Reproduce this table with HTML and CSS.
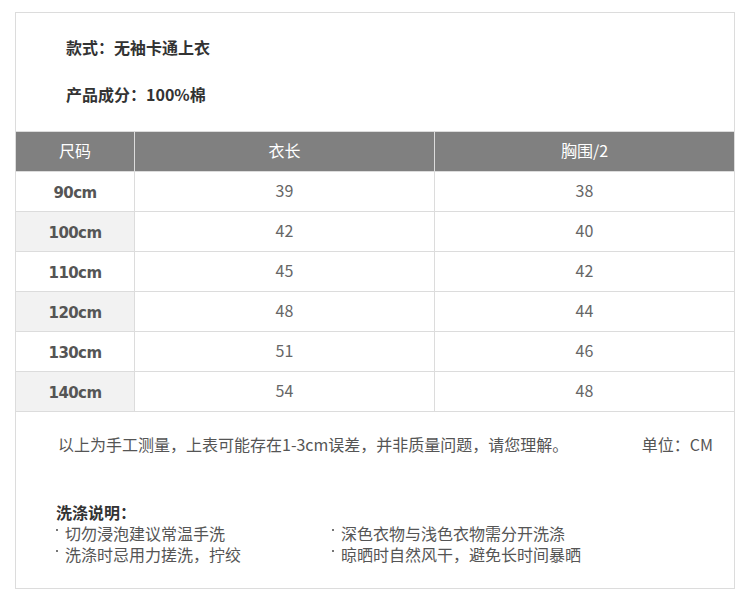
FILE: index.html
```html
<!DOCTYPE html>
<html lang="zh-CN">
<head>
<meta charset="utf-8">
<title>尺码表</title>
<link rel="stylesheet" href="styles.css">
</head>
<body>
<div class="sheet">
  <div class="info">
    <p class="info-line">款式：无袖卡通上衣</p>
    <p class="info-line">产品成分：100%棉</p>
  </div>
  <table class="size-table">
    <colgroup>
      <col class="c1"><col class="c2"><col class="c3">
    </colgroup>
    <thead>
      <tr><th>尺码</th><th>衣长</th><th>胸围/2</th></tr>
    </thead>
    <tbody>
      <tr><td class="size">90cm</td><td>39</td><td>38</td></tr>
      <tr><td class="size alt">100cm</td><td>42</td><td>40</td></tr>
      <tr><td class="size">110cm</td><td>45</td><td>42</td></tr>
      <tr><td class="size alt">120cm</td><td>48</td><td>44</td></tr>
      <tr><td class="size">130cm</td><td>51</td><td>46</td></tr>
      <tr><td class="size alt">140cm</td><td>54</td><td>48</td></tr>
    </tbody>
  </table>
  <div class="note">
    <span>以上为手工测量，上表可能存在1-3cm误差，并非质量问题，请您理解。</span>
    <span>单位：CM</span>
  </div>
  <div class="wash">
    <h3 class="wash-title">洗涤说明：</h3>
    <ul class="wash-list">
      <li>切勿浸泡建议常温手洗</li>
      <li>深色衣物与浅色衣物需分开洗涤</li>
      <li>洗涤时忌用力搓洗，拧绞</li>
      <li>晾晒时自然风干，避免长时间暴晒</li>
    </ul>
  </div>
</div>
</body>
</html>
```

FILE: styles.css
```css
html, body {
  margin: 0;
  padding: 0;
  background: #fff;
}
body {
  font-family: "Noto Sans CJK SC", "Noto Sans", sans-serif;
  font-size: 16px;
  color: #333;
}
.sheet {
  margin: 12px 0 0 15px;
  width: 718px;
  height: 575px;
  border: 1px solid #dcdcdc;
}
.info {
  padding: 11px 0 13px 50px;
}
.info-line {
  margin: 0;
  line-height: 47px;
  font-weight: 700;
  color: #333;
}
.size-table {
  margin-left: -1px;
  width: 719px;
  border-collapse: collapse;
  table-layout: fixed;
}
.size-table col.c1 { width: 119px; }
.size-table col.c2 { width: 300px; }
.size-table col.c3 { width: 300px; }
.size-table th,
.size-table td {
  border: 1px solid #dcdcdc;
  height: 36px;
  padding: 0 0 3px;
  text-align: center;
  vertical-align: middle;
}
.size-table th {
  background: #808080;
  color: #fff;
  font-weight: 400;
  font-size: 16px;
}
.size-table td {
  color: #666;
  font-size: 16px;
}
.size-table td.size {
  font-family: "DejaVu Sans", sans-serif;
  font-weight: 700;
  font-size: 15px;
  letter-spacing: -0.6px;
  color: #555;
  height: 37px;
  padding: 2px 0 0;
}
.size-table td.alt {
  background: #f2f2f2;
}
.note {
  display: flex;
  justify-content: space-between;
  padding: 21px 21px 0 42px;
  line-height: 22px;
  color: #555;
}
.wash {
  padding: 46px 0 0 40px;
}
.wash-title {
  margin: 0;
  font-size: 16px;
  line-height: 22px;
  font-weight: 700;
  color: #333;
}
.wash-list {
  list-style: none;
  margin: 0 0 0 -2px;
  padding: 0;
  display: grid;
  grid-template-columns: 276px auto;
  color: #555;
}
.wash-list li {
  position: relative;
  padding-left: 11px;
  line-height: 21px;
}
.wash-list li::before {
  content: "";
  position: absolute;
  left: 2px;
  top: 6px;
  width: 2px;
  height: 2px;
  background: #777;
}
```
